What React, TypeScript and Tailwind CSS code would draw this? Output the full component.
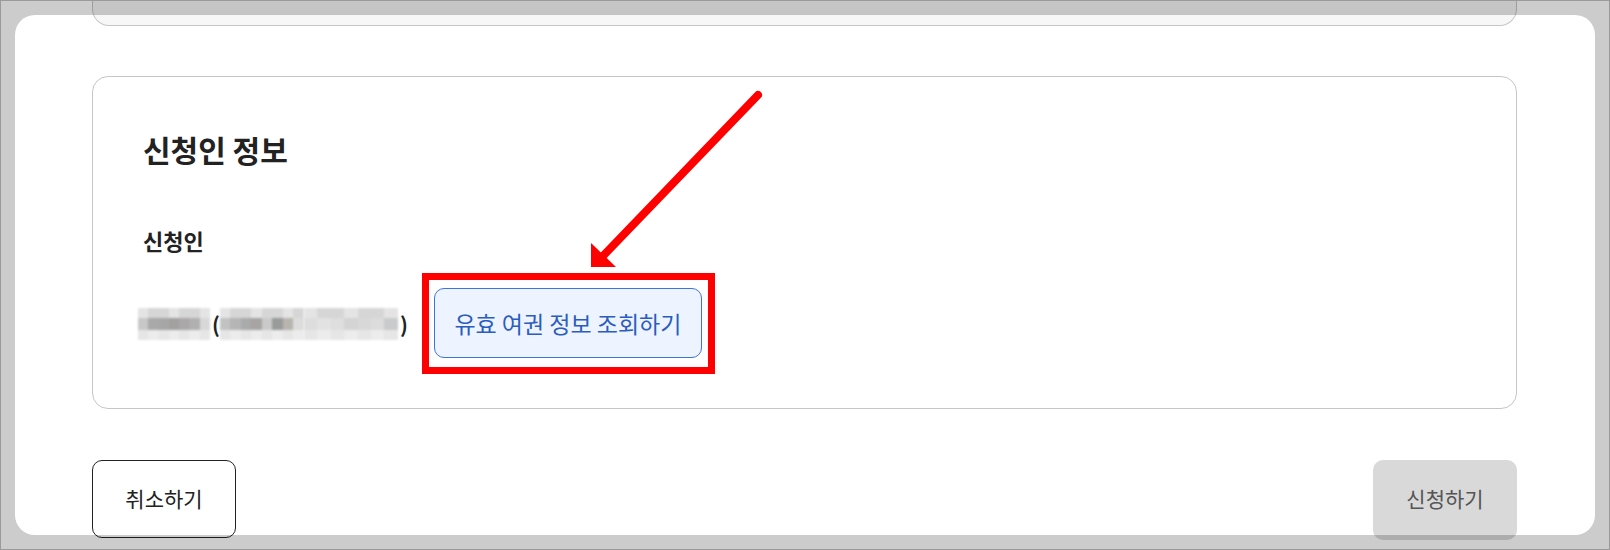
import React from 'react'

const font = { fontFamily: '"Noto Sans CJK KR", "Noto Sans", sans-serif' }

const Mosaic = ({ cells, w }: { cells: string[]; w: number }) => {
  // rough pixelated block standing in for the redacted text
  return (
    <span className="inline-flex flex-col blur-[1px]" style={{ width: w }}>
      <span className="flex h-[10px]">
        {cells.map((c, i) => (
          <span key={i} className="flex-1" style={{ background: i % 3 === 0 ? '#e4e4e4' : '#d6d6d6' }} />
        ))}
      </span>
      <span className="flex h-[12px]">
        {cells.map((c, i) => (
          <span key={i} className="flex-1" style={{ background: c }} />
        ))}
      </span>
      <span className="flex h-[10px]">
        {cells.map((c, i) => (
          <span key={i} className="flex-1" style={{ background: i % 2 === 0 ? '#e6e6e6' : '#ececec' }} />
        ))}
      </span>
    </span>
  )
}

const App = () => {
  return (
    <div className="relative w-[1610px] h-[550px] overflow-hidden bg-white text-[#222]" style={font}>
      {/* previous section, cut off at the top */}
      <div className="ml-[92px] w-[1425px] h-[26px] border border-t-0 border-[#c6c6c6] rounded-b-[17px] bg-[#f7f7f7]" />

      <div className="ml-[92px] mt-[50px] w-[1425px] h-[333px] border border-[#c6c6c6] rounded-[16px] pl-[50px] pt-[53px]">
        <h2 className="text-[30px] leading-[38px] font-bold">신청인 정보</h2>
        <div className="mt-[57px] text-[22px] leading-[30px] font-bold">신청인</div>
        <div className="mt-[18px] flex items-center -ml-[5px]">
          <Mosaic w={72} cells={['#c8c8c8', '#a9a9a9', '#a6a6a6', '#a3a0a0', '#aaa8a8', '#b0b0b0', '#d8d8d8']} />
          <span className="text-[21px] leading-[28px] font-bold ml-[2px]">(</span>
          <span className="flex items-center">
            <Mosaic w={84} cells={['#c2c2c2', '#b5b5b5', '#a9aaaa', '#a8a4a4', '#cacaca', '#999b9b', '#b8b4ae', '#dcdcdc']} />
            <Mosaic w={94} cells={['#dddddd', '#e2e2e2', '#dedede', '#d4d4d4', '#d8d8d8', '#dcdcdc', '#c9cacb']} />
          </span>
          <span className="text-[21px] leading-[28px] font-bold ml-[2px]">)</span>
          <div className="ml-[14px] border-[7px] border-[#ff0000] pl-[5px] pr-[6px] pt-[8px] pb-[9px]">
            <button className="w-[268px] h-[70px] rounded-[10px] border border-[#3d74e0] bg-[#eef4ff] text-[#2b5cc0] text-[23px]">
              유효 여권 정보 조회하기
            </button>
          </div>
        </div>
      </div>

      <div className="ml-[92px] mt-[51px] w-[1425px] flex justify-between">
        <button className="w-[144px] h-[78px] rounded-[10px] border border-[#222] bg-white text-[21px]">취소하기</button>
        <button className="w-[144px] h-[80px] rounded-[10px] bg-[#d9d9d9] text-[#555] text-[21px] pb-[3px]">신청하기</button>
      </div>

      {/* annotation arrow */}
      <svg className="absolute inset-0 pointer-events-none" width="1610" height="550">
        <line x1="758" y1="95" x2="602" y2="257" stroke="#ff0000" strokeWidth="8" strokeLinecap="round" />
        <polygon points="591,243 591,267 616,267" fill="#ff0000" />
      </svg>

      {/* dimmed frame around the window */}
      <div className="absolute left-[15px] top-[15px] w-[1580px] h-[520px] rounded-[20px] pointer-events-none shadow-[0_0_0_40px_rgba(0,0,0,0.2)]" />
      <div className="absolute inset-0 border border-[#9a9a9a] pointer-events-none" />
    </div>
  )
}

export default App
